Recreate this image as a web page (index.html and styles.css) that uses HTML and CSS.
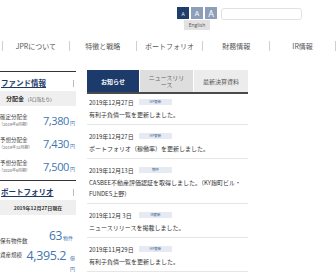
FILE: index.html
```html
<!DOCTYPE html>
<html lang="ja">
<head>
<meta charset="utf-8">
<title>JPR</title>
<link rel="stylesheet" href="styles.css">
</head>
<body>
<header class="top">
  <div class="tools">
    <div class="fontsize">
      <span class="fs fs-s on">A</span><span class="fs fs-m">A</span><span class="fs fs-l">A</span>
    </div>
    <span class="lang">English</span>
  </div>
  <div class="search"></div>
</header>
<nav class="gnav">
  <span class="gitem">JPRについて</span>
  <span class="gitem">特徴と戦略</span>
  <span class="gitem">ポートフォリオ</span>
  <span class="gitem">財務情報</span>
  <span class="gitem last">IR情報</span>
</nav>
<div class="page">
  <aside class="side">
    <section class="sblock">
      <h2 class="shead"><span class="slink">ファンド情報</span><span class="tick"></span></h2>
      <div class="sbox"><b>分配金</b><small>（1口当たり）</small></div>
      <div class="rows">
        <div class="drow"><div class="dlabel">確定分配金<small>（2019年6月期）</small></div><div class="dval">7,380<small>円</small></div></div>
        <div class="drow"><div class="dlabel">予想分配金<small>（2019年12月期）</small></div><div class="dval">7,430<small>円</small></div></div>
        <div class="drow"><div class="dlabel">予想分配金<small>（2020年6月期）</small></div><div class="dval">7,500<small>円</small></div></div>
      </div>
    </section>
    <section class="sblock sb2">
      <h2 class="shead"><span class="slink">ポートフォリオ</span><span class="tick"></span></h2>
      <div class="sbox center"><b>2019年12月27日現在</b></div>
      <div class="prow p1"><span class="plabel">保有物件数</span><span class="pval">63<small>物件</small></span></div>
      <div class="prow p2"><span class="plabel">資産規模</span><span class="pval big">4,395.2</span><span class="punit">億円</span></div>
    </section>
  </aside>
  <main class="news">
    <div class="tabs">
      <span class="tab active">お知らせ</span>
      <span class="tab t2">ニュースリリース</span>
      <span class="tab t3">最新決算資料</span>
    </div>
    <ul class="list">
      <li class="item first"><div class="meta"><span class="date">2019年12月27日</span><span class="tag">HP更新</span></div><p class="txt">有利子負債一覧を更新しました。</p></li>
      <li class="item"><div class="meta"><span class="date">2019年12月27日</span><span class="tag">HP更新</span></div><p class="txt">ポートフォリオ（稼働率）を更新しました。</p></li>
      <li class="item"><div class="meta"><span class="date">2019年12月13日</span><span class="tag">物件</span></div><p class="txt">CASBEE不動産評価認証を取得しました。（KY麹町ビル・FUNDES上野）</p></li>
      <li class="item"><div class="meta"><span class="date">2019年12月 3日</span><span class="tag">IR更新</span></div><p class="txt">ニュースリリースを掲載しました。</p></li>
      <li class="item"><div class="meta"><span class="date">2019年11月29日</span><span class="tag">HP更新</span></div><p class="txt">有利子負債一覧を更新しました。</p></li>
    </ul>
    <div class="more">一覧はこちら</div>
  </main>
</div>
</body>
</html>
```
FILE: styles.css
```css
* { box-sizing: border-box; }
html, body { margin: 0; padding: 0; }
body {
  width: 336px;
  height: 280px;
  overflow: hidden;
  background: #fff;
  color: #444;
  font-family: "Noto Sans CJK JP", "Noto Sans", sans-serif;
}
.top {
  height: 38px;
  display: flex;
  align-items: flex-start;
  padding: 7px 0 0 177px;
  gap: 4px;
}
.tools { display: flex; flex-direction: column; align-items: center; gap: 1px; }
.fontsize { display: flex; gap: 2px; }
.fs {
  width: 12px; height: 12px;
  background: #8e9db8;
  color: #fff;
  display: flex; align-items: center; justify-content: center;
  font-family: "Open Sans", sans-serif;
  line-height: 1;
}
.fs.on { background: #1f3d6a; }
.fs-s { font-size: 5px; padding-top: 2px; }
.fs-m { font-size: 7px; }
.fs-l { font-size: 9px; }
.lang {
  width: 26px; height: 10px;
  background: #e2e2e2;
  color: #555;
  font-family: "Open Sans", sans-serif;
  font-size: 5px;
  display: flex; align-items: center; justify-content: center;
}
.search {
  width: 81px; height: 12px;
  border: 1px solid #e2e2e2;
  border-radius: 3px;
  margin-top: 1px;
}
.gnav {
  display: flex;
  padding: 3px 0 3px 2px;
  height: 16px;
}
.gitem {
  width: 67px;
  height: 10px;
  border-left: 1px solid #cfcfcf;
  font-size: 7px;
  line-height: 10px;
  text-align: center;
  color: #555;
}
.gitem.last { border-right: 1px solid #cfcfcf; }
.page { display: flex; gap: 11px; }
.side { width: 76px; margin-top: 17px; }
.sblock { border-top: 1px solid #333; }
.sb2 { margin-top: 2px; }
.shead {
  margin: 0;
  padding: 5px 0 2px 1px;
  height: 19px;
  display: flex;
  justify-content: space-between;
  align-items: center;
  font-size: 7.5px;
  line-height: 12px;
  color: #1d3a66;
  font-weight: bold;
}
.slink { text-decoration: underline; text-underline-offset: 1px; }
.tick { width: 1px; height: 7px; background: #bbb; margin-right: 2px; }
.sbox {
  height: 15px;
  background: #efefef;
  display: flex; align-items: center;
  padding-left: 6px;
  font-size: 6px;
  color: #333;
}
.sbox small { font-size: 4.5px; margin-left: 1px; }
.sbox.center { justify-content: center; padding-left: 0; font-size: 5px; }
.rows { padding-top: 3px; }
.drow { height: 23px; display: flex; align-items: center; justify-content: space-between; }
.dlabel { font-size: 5.5px; line-height: 7px; color: #444; display: flex; flex-direction: column; }
.dlabel small { font-size: 4px; line-height: 6px; color: #666; margin-left: -1px; }
.dval {
  font-family: "Open Sans", sans-serif;
  font-size: 11px;
  letter-spacing: -0.4px;
  color: #4176b0;
  margin-right: 1px;
}
.dval small { font-family: "Noto Sans CJK JP", sans-serif; font-size: 5px; letter-spacing: 0; margin-left: 1px; }
.prow { display: flex; align-items: flex-end; }
.p1 { height: 22px; margin-top: 8px; }
.plabel { font-size: 5.5px; line-height: 8px; color: #444; width: 49px; }
.pval {
  font-family: "Open Sans", sans-serif;
  font-size: 12px;
  line-height: 14px;
  letter-spacing: -0.4px;
  color: #4176b0;
}
.pval small { font-family: "Noto Sans CJK JP", sans-serif; font-size: 5px; letter-spacing: 0; margin-left: 1px; }
.p2 { align-items: flex-start; margin-top: 3px; }
.p2 .plabel { width: 27px; margin-top: 3px; }
.pval.big { font-size: 12.5px; line-height: 16px; }
.punit { width: 6px; font-size: 5px; line-height: 11px; color: #4176b0; margin-left: 4px; margin-top: 4px; }
.news { width: 161px; margin-top: 16px; }
.tabs {
  display: grid;
  grid-template-columns: 52px 53px 54px;
  gap: 1px;
  height: 24px;
  border-bottom: 2px solid #4a4a4a;
}
.tab {
  display: flex; align-items: center; justify-content: center;
  text-align: center;
  font-size: 6px;
  line-height: 7px;
  color: #666;
  padding: 0 6px;
}
.tab.active { background: #1c3b6b; color: #fff; font-weight: bold; }
.tab.t2 { background: #dedede; }
.tab.t3 { background: #ececec; color: #555; }
.list { list-style: none; margin: 0; padding: 0; }
.item {
  padding: 6px 0 4px 2px;
  border-bottom: 1px solid #e6e6e6;
}
.item.first { padding-top: 3px; }
.meta { display: flex; align-items: center; height: 10px; gap: 5px; }
.date { font-size: 6px; color: #333; width: 45px; white-space: pre; }
.tag {
  width: 33px; height: 6px;
  background: #e6ebf3;
  color: #3d5f8f;
  font-size: 3.5px;
  line-height: 6px;
  text-align: center;
}
.txt { margin: 2px 0 0; font-size: 6px; line-height: 11px; color: #333; }
.more {
  margin-top: 8px;
  width: 74px; height: 14px;
  background: #e8e8e8;
  color: #555;
  font-size: 6px;
  line-height: 12px;
  text-align: center;
  margin-left: 1px;
}
```
